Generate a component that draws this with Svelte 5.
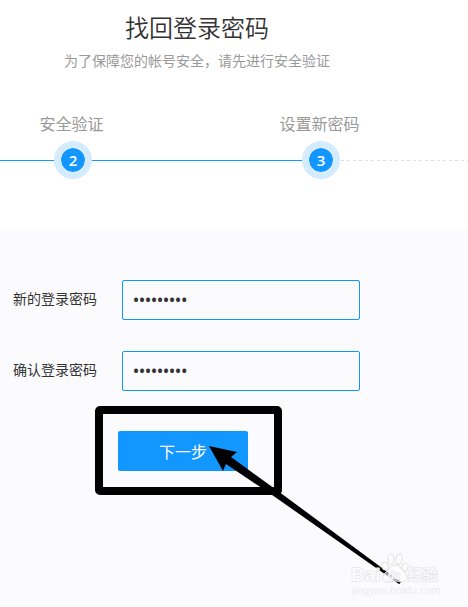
<script lang="ts">
	let password = $state('123456789');
	let confirmPassword = $state('123456789');

	function onSubmit(e: SubmitEvent) {
		e.preventDefault();
	}
</script>

<div class="page">
	<header>
		<div class="heading">
			<h1>找回登录密码</h1>
			<p>为了保障您的帐号安全，请先进行安全验证</p>
		</div>

		<div class="steps">
			<div class="line first"></div>
			<div class="step">
				<span class="name">安全验证</span>
				<span class="dot">2</span>
			</div>
			<div class="line between"></div>
			<div class="step">
				<span class="name">设置新密码</span>
				<span class="dot">3</span>
			</div>
			<svg class="rest" height="1" aria-hidden="true">
				<line x1="1" y1="0.5" x2="100%" y2="0.5" stroke="#ddd" stroke-dasharray="3 3" />
			</svg>
		</div>
	</header>

	<main>
		<form onsubmit={onSubmit}>
			<div class="row">
				<label for="password">新的登录密码</label>
				<input id="password" type="password" bind:value={password} />
			</div>
			<div class="row">
				<label for="confirm">确认登录密码</label>
				<input id="confirm" type="password" bind:value={confirmPassword} />
			</div>
			<div class="actions">
				<button type="submit">下一步</button>
				<!-- marker box and arrow over the button -->
				<svg class="marker" width="310" height="182" viewBox="0 0 310 182" aria-hidden="true">
					<rect x="4" y="4" width="179" height="81" rx="1" fill="none" stroke="#000" stroke-width="8" stroke-linejoin="round" />
					<path d="M114 40 L142 46 L136 51 L187 88 L306 176 L304 178 L180 91 L131 58 L128 65 Z" fill="#000" />
					<path d="M183 89 L250 137 L305 177" fill="none" stroke="#000" stroke-width="2" />
				</svg>
			</div>
		</form>

		<svg class="watermark" width="92" height="46" viewBox="0 0 92 46" aria-hidden="true">
			<g fill="#fff" fill-opacity="0.6" stroke="#e0e0e2" stroke-width="1">
				<ellipse cx="36" cy="13" rx="3" ry="4" transform="rotate(-15 36 13)" />
				<ellipse cx="42" cy="6" rx="3" ry="5" />
				<ellipse cx="50" cy="6" rx="3" ry="5" transform="rotate(10 50 6)" />
				<ellipse cx="56" cy="14" rx="3" ry="4" transform="rotate(15 56 14)" />
				<path d="M46 12 C41 12 40 17 36 20 C32 24 33 29 39 29 C43 29 43 28 46 28 C50 28 51 30 56 28 C60 26 58 22 55 19 C51 15 51 12 46 12 Z" />
			</g>
			<g class="mark">
				<text x="2" y="28" font-size="19" font-weight="bold">Bai</text>
				<text x="39" y="26" font-size="10" font-weight="bold">du</text>
				<text x="59" y="27" font-size="15" font-weight="bold">经验</text>
			</g>
			<text class="url" x="3" y="41" font-size="11">jingyan.baidu.com</text>
		</svg>
	</main>
</div>

<style>
	:global(body) {
		margin: 0;
	}
	.page {
		display: flex;
		flex-direction: column;
		min-height: 100vh;
		background: #fff;
		color: #333;
		font-family: 'Open Sans', 'Noto Sans CJK SC', sans-serif;
		font-size: 14px;
		overflow: hidden;
	}
	header {
		padding: 10px 0 50px;
	}
	.heading {
		margin-right: 74px;
		text-align: center;
	}
	h1 {
		margin: 0 0 5px;
		font-size: 24px;
		font-weight: 350;
		line-height: 36px;
	}
	p {
		margin: 0;
		color: #999;
		line-height: 20px;
	}
	.steps {
		display: flex;
		align-items: flex-end;
		margin-top: 43px;
	}
	.step {
		display: flex;
		flex: none;
		flex-direction: column;
		align-items: center;
		gap: 7px;
		width: 38px;
	}
	.name {
		padding-right: 3px;
		color: #999;
		font-size: 16px;
		line-height: 20px;
		white-space: nowrap;
	}
	.dot {
		box-sizing: border-box;
		width: 38px;
		height: 38px;
		border: 7px solid #d4ecfd;
		border-radius: 50%;
		background: #1296ff;
		background-clip: padding-box;
		color: #fff;
		font-size: 15px;
		font-weight: 600;
		line-height: 24px;
		text-align: center;
	}
	.line {
		flex: none;
		height: 1px;
		margin-bottom: 18px;
		background: #1296ff;
	}
	.first {
		width: 54px;
	}
	.between {
		width: 210px;
	}
	.rest {
		flex: 1;
		width: 0;
		margin-bottom: 18px;
	}
	main {
		position: relative;
		flex: 1;
		background: #fbfbfe;
	}
	form {
		padding: 51px 13px 40px;
	}
	.row {
		display: flex;
		align-items: center;
		gap: 25px;
		margin-bottom: 31px;
	}
	label {
		padding-bottom: 2px;
		line-height: 20px;
	}
	input {
		box-sizing: border-box;
		width: 238px;
		height: 40px;
		padding: 0 10px;
		border: 1px solid #1296ff;
		border-radius: 2px;
		outline: none;
		background: transparent;
		color: #333;
		font-family: 'Open Sans', sans-serif;
		font-size: 16px;
		font-weight: 600;
	}
	.actions {
		position: relative;
		margin: 40px 0 0 105px;
	}
	button {
		display: block;
		width: 130px;
		height: 40px;
		padding: 0;
		border: 0;
		border-radius: 2px;
		background: #1296ff;
		color: #fff;
		font-family: inherit;
		font-size: 16px;
		cursor: pointer;
	}
	.marker {
		position: absolute;
		top: -25px;
		left: -23px;
		pointer-events: none;
	}
	.watermark {
		position: absolute;
		right: 27px;
		bottom: 8px;
		pointer-events: none;
	}
	.watermark text {
		font-family: 'Liberation Sans', 'Noto Sans CJK SC', sans-serif;
	}
	.mark {
		fill: #fff;
		fill-opacity: 0.8;
		stroke: #e0e0e2;
		stroke-width: 1px;
		paint-order: stroke;
	}
	.url {
		fill: #ebebed;
	}
</style>
